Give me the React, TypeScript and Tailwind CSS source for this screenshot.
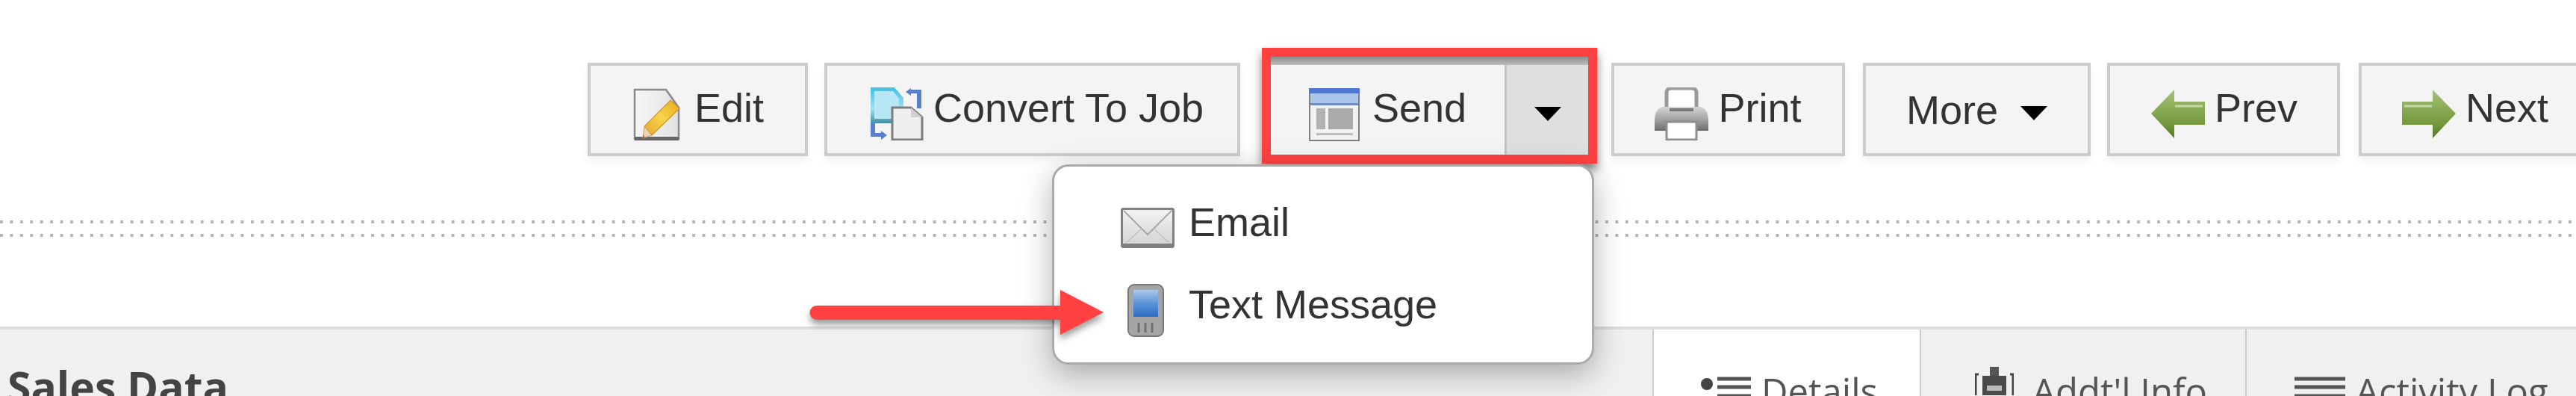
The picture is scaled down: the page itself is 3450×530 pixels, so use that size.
import React from 'react';

const EditIcon = () => (
  <svg width="63" height="70" viewBox="0 0 63 70" className="shrink-0">
    <defs>
      <linearGradient id="pencil" x1="0" y1="1" x2="1" y2="0">
        <stop offset="0" stopColor="#e3a92a" />
        <stop offset="0.5" stopColor="#f7d34a" />
        <stop offset="1" stopColor="#e8a81e" />
      </linearGradient>
      <linearGradient id="page" x1="0" y1="0" x2="1" y2="0">
        <stop offset="0" stopColor="#f7f7f7" />
        <stop offset="1" stopColor="#e2e2e2" />
      </linearGradient>
    </defs>
    <path d="M2 2H44L61 26V68H2Z" fill="url(#page)" stroke="#8a8a8a" strokeWidth="2.5" />
    <path d="M2 65H61V70H2Z" fill="#666" />
    <path d="M50 16L62 27L25 63L15 51Z" fill="url(#pencil)" stroke="#cf961f" strokeWidth="1.2" />
    <path d="M15 51L25 63L13 67Z" fill="#f3d3ae" stroke="#c99a6a" strokeWidth="1" />
    <path d="M13 62L16 66L13 67Z" fill="#a8642a" />
  </svg>
);

const ConvertIcon = () => (
  <svg width="71" height="71" viewBox="0 0 71 71" className="shrink-0">
    <defs>
      <linearGradient id="docBlue" x1="0" y1="0" x2="0" y2="1">
        <stop offset="0" stopColor="#3fc0e6" />
        <stop offset="0.6" stopColor="#a5dff0" />
        <stop offset="1" stopColor="#3d8ea6" />
      </linearGradient>
    </defs>
    <path d="M0 0H32L44 14V48H0Z" fill="url(#docBlue)" />
    <path d="M5 5H30L38 15V42H5Z" fill="#b7e6f5" />
    <path d="M29 27H54L69 40V70H29Z" fill="#efefef" stroke="#7d7d7d" strokeWidth="3" />
    <path d="M54 27V40H69Z" fill="#d0d0d0" />
    <path d="M54 1L47 6L54 11V8H62V28H68V3H54Z" fill="#5a80cc" />
    <path d="M14 70L22 64L14 58V61H6V47H0V66H14Z" fill="#5a80cc" />
  </svg>
);

const SendIcon = () => (
  <svg width="68" height="71" viewBox="0 0 68 71" className="shrink-0">
    <rect x="1" y="1" width="66" height="69" fill="#f2f2f2" stroke="#808080" strokeWidth="2" />
    <rect x="0" y="0" width="68" height="7" fill="#4f78d2" />
    <rect x="2" y="7" width="64" height="13" fill="#a9c5ea" />
    <rect x="2" y="20" width="64" height="3" fill="#6f8fc4" />
    <rect x="10" y="27" width="12" height="28" fill="#b2b2b2" />
    <rect x="26" y="27" width="33" height="28" fill="#aaaaaa" />
    <rect x="10" y="60" width="49" height="3" fill="#bcbcbc" />
  </svg>
);

const PrintIcon = () => (
  <svg width="72" height="71" viewBox="0 0 72 71" className="shrink-0">
    <defs>
      <linearGradient id="printerBody" x1="0" y1="0" x2="0" y2="1">
        <stop offset="0" stopColor="#d5d5d5" />
        <stop offset="0.55" stopColor="#a0a0a0" />
        <stop offset="1" stopColor="#6c6c6c" />
      </linearGradient>
    </defs>
    <rect x="16" y="1" width="40" height="34" rx="6" fill="#ffffff" stroke="#9a9a9a" strokeWidth="5" />
    <path d="M10 26H62Q72 30 72 44V58H0V44Q0 30 10 26Z" fill="url(#printerBody)" />
    <rect x="20" y="28" width="32" height="4" fill="#767676" />
    <path d="M16 46H56V70H16Z" fill="#ffffff" stroke="#8d8d8d" strokeWidth="3" />
  </svg>
);

const ArrowIcon = ({ flip = false }: { flip?: boolean }) => (
  <svg width="72" height="65" viewBox="0 0 72 65" className={flip ? 'shrink-0 -scale-x-100' : 'shrink-0'}>
    <defs>
      <linearGradient id={flip ? 'prevGreen' : 'nextGreen'} x1="0" y1="0" x2="0" y2="1">
        <stop offset="0" stopColor="#a9c284" />
        <stop offset="0.3" stopColor="#8fb05c" />
        <stop offset="0.7" stopColor="#75993e" />
        <stop offset="1" stopColor="#557a26" />
      </linearGradient>
    </defs>
    <path d="M0 16H41V0L72 32L41 65V47H0Z" fill={`url(#${flip ? 'prevGreen' : 'nextGreen'})`} />
    <path d="M3 22H40" stroke="#c6d8a9" strokeWidth="3" />
  </svg>
);

const EnvelopeIcon = () => (
  <svg width="72" height="54" viewBox="0 0 72 54" className="shrink-0">
    <defs>
      <linearGradient id="envelope" x1="0" y1="0" x2="0" y2="1">
        <stop offset="0" stopColor="#f4f4f4" />
        <stop offset="1" stopColor="#d2d2d2" />
      </linearGradient>
    </defs>
    <rect x="1.5" y="1.5" width="69" height="51" rx="2" fill="url(#envelope)" stroke="#808080" strokeWidth="3" />
    <path d="M4 4L36 36L68 4" fill="none" stroke="#a8a8a8" strokeWidth="2" />
    <path d="M4 50L28 28M68 50L44 28" fill="none" stroke="#c2c2c2" strokeWidth="1.5" />
    <rect x="1" y="48" width="70" height="5" fill="#7f7f7f" />
  </svg>
);

const PhoneIcon = () => (
  <svg width="49" height="71" viewBox="0 0 49 71" className="shrink-0">
    <defs>
      <linearGradient id="screen" x1="0" y1="0" x2="0" y2="1">
        <stop offset="0" stopColor="#a9c9ec" />
        <stop offset="0.5" stopColor="#5b93d8" />
        <stop offset="1" stopColor="#2f6cc2" />
      </linearGradient>
    </defs>
    <rect x="1" y="1" width="47" height="69" rx="8" fill="#a5a5a5" stroke="#777" strokeWidth="2" />
    <rect x="8" y="8" width="33" height="36" fill="url(#screen)" />
    <path d="M15 52V65M24 52V65M33 52V65" stroke="#707070" strokeWidth="3" />
  </svg>
);

const Caret = () => (
  <svg width="36" height="19" viewBox="0 0 36 19" className="shrink-0">
    <path d="M0 0H36L18 19Z" fill="#000" />
  </svg>
);

const DetailsIcon = () => (
  <svg width="67" height="30" viewBox="0 0 67 30" className="shrink-0">
    <circle cx="8" cy="10" r="8" fill="#444" />
    <path d="M22 3H67M22 14H67M22 26H67" stroke="#555" strokeWidth="5" />
  </svg>
);

const InfoIcon = () => (
  <svg width="52" height="38" viewBox="0 0 52 38" className="shrink-0">
    <path d="M5 10H1V38M47 10H51V38" fill="none" stroke="#444" strokeWidth="3" />
    <rect x="20" y="0" width="12" height="14" fill="#555" />
    <rect x="10" y="12" width="32" height="26" fill="#4a4a4a" />
    <rect x="16" y="25" width="20" height="7" fill="#bbb" />
  </svg>
);

const LogIcon = () => (
  <svg width="68" height="30" viewBox="0 0 68 30" className="shrink-0">
    <path d="M0 3H68M0 14H68M0 26H68" stroke="#555" strokeWidth="5" />
  </svg>
);

const ToolButton: React.FC<{ className: string; children: React.ReactNode }> = ({ className, children }) => (
  <div className={`h-[125px] shrink-0 flex items-center justify-center border-[4px] border-[#cccccc] bg-[#f4f4f4] shadow-[0_6px_10px_rgba(0,0,0,0.06)] ${className}`}>
    {children}
  </div>
);

const Label: React.FC<{ children: React.ReactNode }> = ({ children }) => (
  <span className="mb-[6px] text-[54px] leading-none text-[#333333] whitespace-nowrap">{children}</span>
);

const DottedLine = ({ className = '' }: { className?: string }) => (
  <div className={`h-[4px] bg-[linear-gradient(to_right,#b4b4b4_4px,transparent_4px)] bg-[length:13.45px_4px] ${className}`} />
);

const App: React.FC = () => {
  return (
    <div className="relative w-[3450px] h-[530px] overflow-hidden bg-white font-['Liberation_Sans',Arial,sans-serif]">
      <div className="flex items-start pt-[84px] pl-[787px] w-[3600px]">
        <ToolButton className="w-[295px] gap-[19px] pl-[2px]">
          <div className="mt-[12px] flex"><EditIcon /></div>
          <Label>Edit</Label>
        </ToolButton>
        <ToolButton className="w-[557px] gap-[13px] ml-[22px] pl-[13px]">
          <div className="mt-[12px] flex"><ConvertIcon /></div>
          <Label>Convert To Job</Label>
        </ToolButton>

        {/* red box is the annotation from the screenshot */}
        <div className="shrink-0 w-[449px] h-[155px] -mt-[20px] ml-[29px] border-[12px] border-[#ff4141] shadow-[0_8px_12px_rgba(0,0,0,0.5)] flex flex-col">
          <div className="h-[11px] bg-gradient-to-b from-[#8c8c8c] to-[#bdbdbd]" />
          <div className="flex flex-1">
            <div className="w-[316px] flex items-center justify-center gap-[17px] bg-[#f4f4f4] border-r-[3px] border-[#c4c4c4]">
              <div className="mt-[12px] flex"><SendIcon /></div>
              <Label>Send</Label>
            </div>
            <div className="flex-1 flex items-center justify-center bg-[#dfdfdf]">
              <div className="mt-[10px] flex"><Caret /></div>
            </div>
          </div>
        </div>

        <ToolButton className="w-[313px] gap-[13px] ml-[19px]">
          <div className="mt-[12px] flex"><PrintIcon /></div>
          <Label>Print</Label>
        </ToolButton>
        <ToolButton className="w-[305px] gap-[30px] ml-[24px]">
          <span className="text-[54px] leading-none text-[#333333]">More</span>
          <div className="mt-[10px] flex"><Caret /></div>
        </ToolButton>
        <ToolButton className="w-[312px] gap-[13px] ml-[22px] pl-[2px]">
          <div className="mt-[12px] flex"><ArrowIcon flip /></div>
          <Label>Prev</Label>
        </ToolButton>
        <ToolButton className="w-[312px] gap-[13px] ml-[25px]">
          <div className="mt-[12px] flex"><ArrowIcon /></div>
          <Label>Next</Label>
        </ToolButton>
      </div>

      <DottedLine className="mt-[76px]" />
      <DottedLine className="mt-[14px]" />

      <div className="mt-[120px] h-[93px] border-t-[4px] border-[#dddddd] bg-[#f0f0f0] flex font-['Open_Sans',sans-serif] overflow-hidden">
        <div className="pl-[10px] pt-[48px] text-[57px] leading-none font-bold text-[#444444] whitespace-nowrap">Sales Data</div>
        <div className="ml-auto flex text-[49px] leading-none text-[#555555]">
          <div className="w-[360px] h-full pt-[58px] pl-[63px] flex gap-[14px] bg-white border-x-[2px] border-[#cccccc]">
            <div className="mt-[5px]"><DetailsIcon /></div>
            <span>Details</span>
          </div>
          <div className="w-[436px] h-full pt-[50px] pl-[72px] flex gap-[25px] border-r-[2px] border-[#cccccc]">
            <div><InfoIcon /></div>
            <span className="mt-[8px] whitespace-nowrap">Addt'l Info</span>
          </div>
          <div className="w-[441px] h-full pt-[58px] pl-[64px] flex gap-[14px]">
            <div className="mt-[5px]"><LogIcon /></div>
            <span className="whitespace-nowrap">Activity Log</span>
          </div>
        </div>
      </div>

      <div className="absolute left-[1409px] top-[220px] w-[726px] h-[268px] rounded-[22px] border-[3px] border-[#aaaaaa] bg-white shadow-[0_12px_40px_rgba(0,0,0,0.3)] pt-[37px] pl-[89px] flex flex-col gap-[30px]">
        <div className="h-[80px] flex items-center">
          <div className="w-[91px] mt-[10px] flex"><EnvelopeIcon /></div>
          <Label>Email</Label>
        </div>
        <div className="h-[80px] flex items-center">
          <div className="w-[91px] pl-[9px] mt-[10px] flex"><PhoneIcon /></div>
          <Label>Text Message</Label>
        </div>
      </div>

      {/* annotation arrow pointing at the menu item */}
      <svg width="394" height="60" viewBox="0 0 394 60" className="absolute left-[1084px] top-[388px] drop-shadow-[0_6px_5px_rgba(0,0,0,0.4)]">
        <path d="M10 21H336V0L394 30L336 60V40H10A9.5 9.5 0 0 1 10 21Z" fill="#ff4141" />
      </svg>
    </div>
  );
};

export default App;
